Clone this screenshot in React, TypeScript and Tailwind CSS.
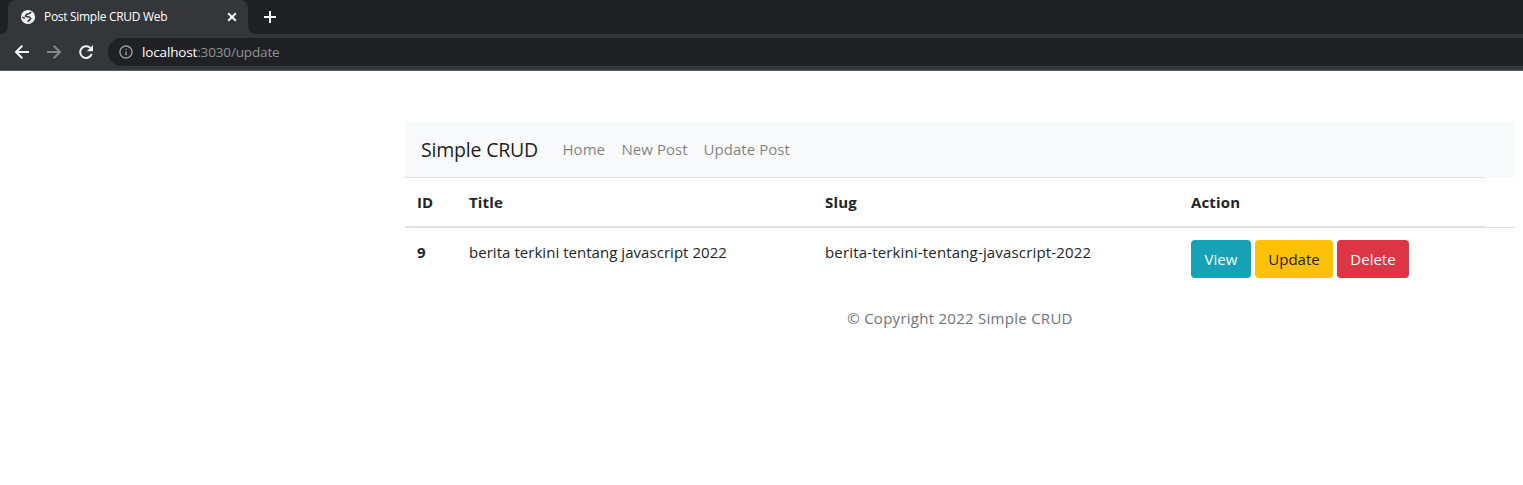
import type { ReactNode } from "react";
import { MdInfoOutline } from "react-icons/md";

interface Post {
  id: number;
  title: string;
  slug: string;
}

const posts: Post[] = [
  {
    id: 9,
    title: "berita terkini tentang javascript 2022",
    slug: "berita-terkini-tentang-javascript-2022",
  },
];

function GlobeIcon() {
  return (
    <svg viewBox="0 0 16 16" className="size-4 shrink-0" fill="none">
      <circle cx="8" cy="8" r="7.1" fill="#f1f3f4" />
      <path
        d="M11.2 3 9.4 4.6 6.6 5.2 5.4 7.2 9.2 8 10.8 9.6 9 11.4 7.6 12.8M2.4 8.2 5 9.4"
        stroke="#35363a"
        strokeWidth="1.5"
        strokeLinejoin="round"
      />
    </svg>
  );
}

function StrokeIcon({ d, className }: { d: string; className: string }) {
  return (
    <svg
      viewBox="0 0 20 20"
      className={`size-5 shrink-0 ${className}`}
      fill="none"
      stroke="currentColor"
      strokeWidth="2"
    >
      <path d={d} />
    </svg>
  );
}

function ReloadIcon() {
  return (
    <svg viewBox="0 0 20 20" className="ml-3 size-5 shrink-0 text-[#f1f3f4]" fill="none">
      <path
        d="M14.3 5.9A5.9 5.9 0 1 0 15.7 11.9"
        stroke="currentColor"
        strokeWidth="2"
      />
      <path d="M17 3v6.2h-6.2z" fill="currentColor" />
    </svg>
  );
}

function BrowserBar() {
  return (
    <header className="border-b border-[#5a5a60] bg-[#35363a]">
      <div className="flex h-[34px] bg-[#202124]">
        {/* Curved feet on both sides of the active tab */}
        <div className="flex w-2 items-end bg-[#35363a]">
          <div className="h-full w-full rounded-br-lg bg-[#202124]" />
        </div>
        <div className="bg-[#202124]">
          <div className="flex h-full w-[240px] items-center rounded-t-lg bg-[#35363a] pl-3 pr-[6px]">
            <GlobeIcon />
            <span className="ml-2 flex-1 whitespace-nowrap text-[12px] tracking-[-0.3px] text-white">
              Post Simple CRUD Web
            </span>
            <StrokeIcon d="M6.2 6.2l7.6 7.6M13.8 6.2l-7.6 7.6" className="text-white" />
          </div>
        </div>
        <div className="w-2 bg-[#35363a]">
          <div className="h-full rounded-bl-lg bg-[#202124]" />
        </div>
        <StrokeIcon d="M10 4v12M4 10h12" className="ml-[4px] mt-[7px] text-white" />
      </div>
      <div className="flex h-9 items-center pl-3">
        <StrokeIcon d="M17 10H4.5M10.3 3.7 4 10l6.3 6.3" className="text-[#f1f3f4]" />
        <StrokeIcon d="M3 10h12.5M9.7 3.7 16 10l-6.3 6.3" className="ml-3 text-[#85868a]" />
        <ReloadIcon />
        <div className="ml-3 flex h-7 flex-1 items-center rounded-l-full bg-[#202124] pl-[10px]">
          <MdInfoOutline className="size-4 text-[#9aa0a6]" />
          <span className="ml-2 whitespace-nowrap text-[13.5px] tracking-[-0.15px] text-[#8f9296]">
            <span className="text-white">localhost</span>:3030/update
          </span>
        </div>
      </div>
    </header>
  );
}

function Navbar() {
  return (
    <nav className="flex h-14 items-center bg-[#f8f9fa] px-4">
      <a className="w-[117px] whitespace-nowrap pt-px text-[19.5px] tracking-[-0.2px] text-black/90">
        Simple CRUD
      </a>
      <ul className="ml-[24.5px] flex gap-4 whitespace-nowrap text-[15px] tracking-[0.05px] text-black/50">
        <li className="w-[43px]">Home</li>
        <li className="w-[66px]">New Post</li>
        <li>Update Post</li>
      </ul>
    </nav>
  );
}

function ActionButton({ className, children }: { className: string; children: ReactNode }) {
  return (
    <button className={`h-[38px] whitespace-nowrap rounded text-[15px] ${className}`}>
      {children}
    </button>
  );
}

function PostTable() {
  return (
    <table className="w-[1080px] table-fixed border-collapse text-left">
      <colgroup>
        <col className="w-[52px]" />
        <col className="w-[356px]" />
        <col className="w-[366px]" />
        <col />
      </colgroup>
      <thead>
        <tr className="h-[49px] border-b-2 border-t border-b-[#dee2e6] border-t-[#dee2e6] font-bold tracking-[0.15px]">
          <th className="px-3 pt-px">ID</th>
          <th className="px-3 pt-px">Title</th>
          <th className="px-3 pt-px">Slug</th>
          <th className="px-3 pt-px">Action</th>
        </tr>
      </thead>
      <tbody>
        {posts.map((post) => (
          <tr key={post.id} className="align-top">
            <th className="p-3">{post.id}</th>
            <td className="whitespace-nowrap p-3 tracking-[0.04px]">{post.title}</td>
            <td className="whitespace-nowrap p-3 tracking-[0.16px]">{post.slug}</td>
            <td className="p-3">
              <div className="flex gap-1">
                <ActionButton className="w-[60px] bg-[#17a2b8] text-white">View</ActionButton>
                <ActionButton className="w-[78px] bg-[#ffc107] text-[#212529]">Update</ActionButton>
                <ActionButton className="w-[72px] bg-[#dc3545] text-white">Delete</ActionButton>
              </div>
            </td>
          </tr>
        ))}
      </tbody>
    </table>
  );
}

export default function App() {
  return (
    <div className="h-[485px] overflow-hidden bg-white font-['Open_Sans',sans-serif] text-[15px] leading-6 text-[#212529]">
      <BrowserBar />
      <main className="ml-[405px] mt-[50px] w-[1110px]">
        <Navbar />
        <div className="flex">
          <PostTable />
          {/* The header rule runs on past the table to the container edge */}
          <div className="h-[51px] flex-1 border-b border-[#dee2e6]" />
        </div>
        <footer className="mt-4 text-center tracking-[0.27px] text-[#6c757d]">
          © Copyright 2022 Simple CRUD
        </footer>
      </main>
    </div>
  );
}
